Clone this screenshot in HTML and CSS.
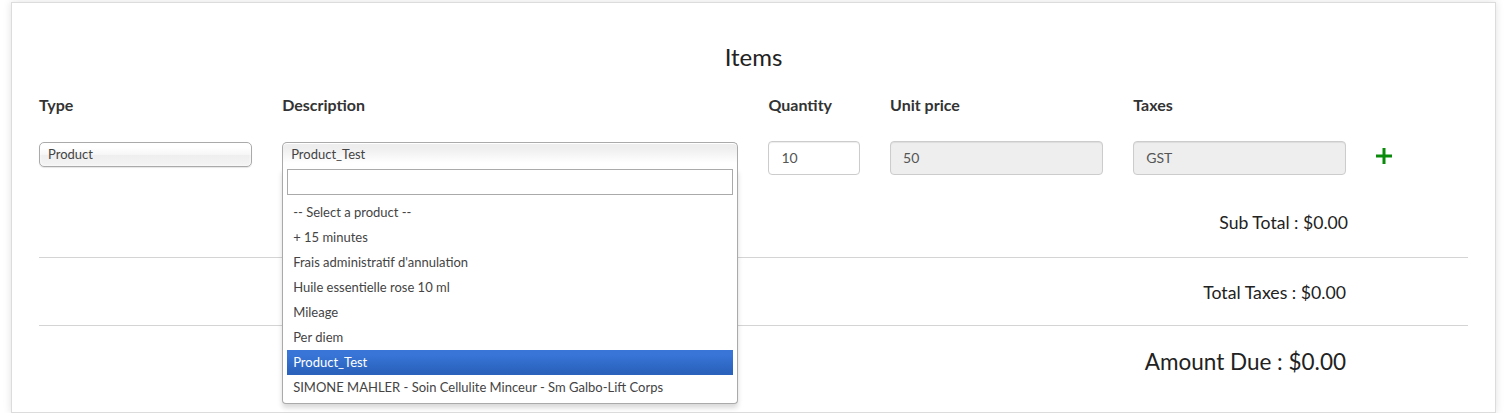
FILE: index.html
```html
<!DOCTYPE html>
<html>
<head>
<meta charset="utf-8">
<link rel="stylesheet" href="styles.css">
</head>
<body>
<div class="card">
  <h3 class="title">Items</h3>
  <div class="row labels">
    <div class="col c2">Type</div>
    <div class="col c4">Description</div>
    <div class="col c1">Quantity</div>
    <div class="col c2">Unit price</div>
    <div class="col c2">Taxes</div>
    <div class="col c1"></div>
  </div>
  <div class="row fields">
    <div class="col c2">
      <div class="chosen"><div class="chosen-single">Product</div></div>
    </div>
    <div class="col c4">
      <div class="chosen open">
        <div class="chosen-single">Product_Test</div>
        <div class="chosen-drop">
          <div class="chosen-search"><input class="search-input" type="text"></div>
          <ul class="results">
            <li>-- Select a product --</li>
            <li>+ 15 minutes</li>
            <li>Frais administratif d'annulation</li>
            <li>Huile essentielle rose 10 ml</li>
            <li>Mileage</li>
            <li>Per diem</li>
            <li class="highlighted">Product_Test</li>
            <li>SIMONE MAHLER - Soin Cellulite Minceur - Sm Galbo-Lift Corps</li>
          </ul>
        </div>
      </div>
    </div>
    <div class="col c1"><div class="form-control">10</div></div>
    <div class="col c2"><div class="form-control readonly">50</div></div>
    <div class="col c2"><div class="form-control readonly">GST</div></div>
    <div class="col c1">
      <svg class="plus" width="16" height="16" viewBox="0 0 16 16"><rect x="6.5" y="0" width="3" height="16" fill="#0a8a0a"/><rect x="0" y="6.5" width="16" height="3" fill="#0a8a0a"/></svg>
    </div>
  </div>
  <div class="total sub">Sub Total : $0.00</div>
  <div class="line line1"></div>
  <div class="total taxes">Total Taxes : $0.00</div>
  <div class="line line2"></div>
  <div class="total due">Amount Due : $0.00</div>
</div>
</body>
</html>
```

FILE: styles.css
```css
html, body {
  margin: 0;
  padding: 0;
  background: #fff;
}
body {
  font-family: Lato, "Open Sans", sans-serif;
  color: #333;
}
.card {
  box-sizing: border-box;
  margin: 2px 0 0 11px;
  width: 1485px;
  height: 411px;
  border: 1px solid #dcdcdc;
  box-shadow: 0 0 8px rgba(0, 0, 0, 0.12);
  padding: 41px 12px 0 12px;
  background: #fff;
}
.title {
  margin: 0;
  text-align: center;
  font-weight: 400;
  font-size: 24px;
  line-height: 26px;
  color: #222;
}
.row {
  display: flex;
}
.col {
  box-sizing: border-box;
  padding: 0 15px;
}
.c1 { width: 8.3333%; }
.c2 { width: 16.6667%; }
.c4 { width: 33.3333%; }
.labels {
  margin-top: 25px;
  font-weight: 700;
  font-size: 16px;
  line-height: 20px;
  color: #333;
}
.fields {
  margin-top: 26px;
  height: 34px;
  position: relative;
  z-index: 5;
}
.chosen {
  position: relative;
  margin-top: 1px;
  font-size: 13px;
}
.chosen-single {
  box-sizing: border-box;
  height: 25px;
  border: 1px solid #aaa;
  border-radius: 5px;
  padding: 0 0 0 8px;
  line-height: 23px;
  color: #444;
  background: linear-gradient(#fff 20%, #f6f6f6 50%, #eee 52%, #f4f4f4 100%);
  box-shadow: 0 0 3px #fff inset, 0 1px 1px rgba(0, 0, 0, 0.1);
}
.open .chosen-single {
  border-bottom-left-radius: 0;
  border-bottom-right-radius: 0;
  border-bottom: 0;
  height: 26px;
  background: linear-gradient(#eee 20%, #fff 80%);
  box-shadow: 0 1px 0 #fff inset;
}
.chosen-drop {
  position: absolute;
  top: 26px;
  left: 0;
  right: 0;
  box-sizing: border-box;
  border: 1px solid #aaa;
  border-top: 0;
  border-radius: 0 0 4px 4px;
  background: #fff;
  box-shadow: 0 4px 5px rgba(0, 0, 0, 0.15);
}
.chosen-search {
  padding: 1px 4px 5px 4px;
}
.search-input {
  display: block;
  box-sizing: border-box;
  width: 100%;
  height: 26px;
  margin: 0;
  border: 1px solid #aaa;
  padding: 4px 5px;
  outline: none;
  background: #fff;
}
.results {
  list-style: none;
  margin: 0 4px 3px 0;
  padding: 0 0 0 4px;
  color: #444;
}
.results li {
  padding: 5px 6px;
  line-height: 15px;
}
.results li.highlighted {
  color: #fff;
  background-color: #3875d7;
  background-image: linear-gradient(#3875d7 20%, #2a62bc 90%);
}
.form-control {
  box-sizing: border-box;
  height: 34px;
  padding: 0 12px;
  line-height: 32px;
  font-size: 14px;
  color: #555;
  border: 1px solid #ccc;
  border-radius: 4px;
  background: #fff;
  box-shadow: inset 0 1px 1px rgba(0, 0, 0, 0.075);
}
.form-control.readonly {
  background: #eee;
}
.plus {
  display: block;
  margin-top: 7px;
}
.total {
  text-align: right;
  padding-right: 137px;
  color: #222;
}
.sub {
  margin-top: 38px;
  font-size: 17.6px;
  line-height: 20px;
  padding-right: 135px;
}
.taxes {
  margin-top: 25px;
  font-size: 17.7px;
  line-height: 20px;
}
.due {
  margin-top: 22px;
  font-size: 22.5px;
  line-height: 28px;
}
.line {
  margin-left: 15px;
  margin-right: 15px;
  height: 1px;
  background: #d4d4d4;
}
.line1 { margin-top: 24px; }
.line2 { margin-top: 22px; }
```
